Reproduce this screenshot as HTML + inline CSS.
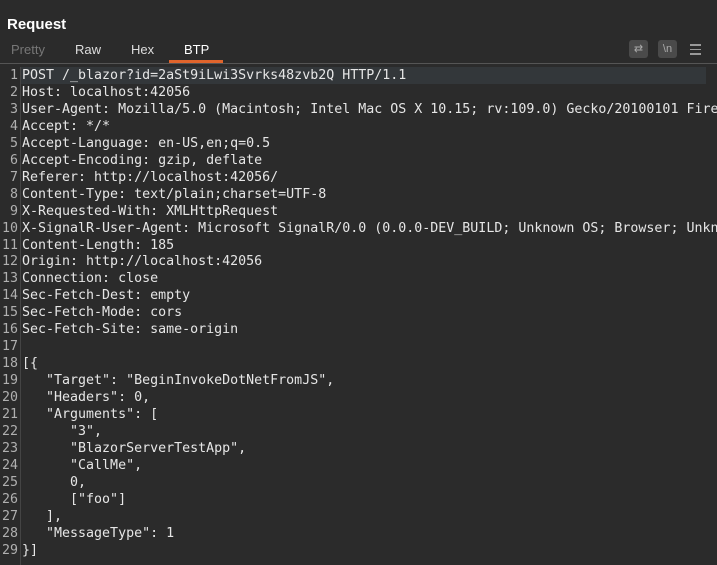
<!DOCTYPE html>
<html><head><style>
body{margin:0;width:717px;height:565px;background:#2b2b2b;overflow:hidden;font-family:"Liberation Sans",sans-serif;}
.title{position:absolute;left:7px;top:16px;color:#fff;font-weight:bold;font-size:15px;}
.tabs{position:absolute;top:42px;left:0;font-size:13px;}
.tab{position:absolute;top:0;color:#ddd;}
.sep{position:absolute;left:0;top:63px;width:717px;height:1px;background:#555;}
.ul{position:absolute;left:169px;top:60px;width:54px;height:3px;background:#e0642c;}
.ic{position:absolute;top:40px;width:19px;height:18px;background:#4a4a4a;border-radius:3px;color:#aaa;font-size:11px;text-align:center;line-height:18px;}
.hl{position:absolute;left:21px;top:67px;width:685px;height:17px;background:#33373a;}
.gut{position:absolute;left:20px;top:67px;width:1px;height:498px;background:#444;}
pre{position:absolute;margin:0;top:68px;font-family:"DejaVu Sans Mono","Liberation Mono",monospace;font-size:13.3px;line-height:16.96px;color:#e6e6e6;}
.num{left:0;width:18px;text-align:right;color:#b0b0b0;}
.code{left:22px;white-space:pre;}
</style></head><body>
<div class="title">Request</div>
<div class="tabs">
<span class="tab" style="left:11px;color:#777">Pretty</span>
<span class="tab" style="left:75px">Raw</span>
<span class="tab" style="left:131px">Hex</span>
<span class="tab" style="left:184px;color:#fff">BTP</span>
</div>
<div class="sep"></div><div class="ul"></div>
<div class="ic" style="left:629px">&#8644;</div>
<div class="ic" style="left:658px">\n</div>
<div style="position:absolute;left:690px;top:44px;width:11px;">
<div style="height:1.5px;background:#999;margin-bottom:3px"></div><div style="height:1.5px;background:#999;margin-bottom:3px"></div><div style="height:1.5px;background:#999"></div></div>
<div class="hl"></div><div class="gut"></div>
<pre class="num">1
2
3
4
5
6
7
8
9
10
11
12
13
14
15
16
17
18
19
20
21
22
23
24
25
26
27
28
29</pre>
<pre class="code">POST /_blazor?id=2aSt9iLwi3Svrks48zvb2Q HTTP/1.1
Host: localhost:42056
User-Agent: Mozilla/5.0 (Macintosh; Intel Mac OS X 10.15; rv:109.0) Gecko/20100101 Firefox
Accept: */*
Accept-Language: en-US,en;q=0.5
Accept-Encoding: gzip, deflate
Referer: http://localhost:42056/
Content-Type: text/plain;charset=UTF-8
X-Requested-With: XMLHttpRequest
X-SignalR-User-Agent: Microsoft SignalR/0.0 (0.0.0-DEV_BUILD; Unknown OS; Browser; Unknown
Content-Length: 185
Origin: http://localhost:42056
Connection: close
Sec-Fetch-Dest: empty
Sec-Fetch-Mode: cors
Sec-Fetch-Site: same-origin

[{
   "Target": "BeginInvokeDotNetFromJS",
   "Headers": 0,
   "Arguments": [
      "3",
      "BlazorServerTestApp",
      "CallMe",
      0,
      ["foo"]
   ],
   "MessageType": 1
}]</pre>
</body></html>
